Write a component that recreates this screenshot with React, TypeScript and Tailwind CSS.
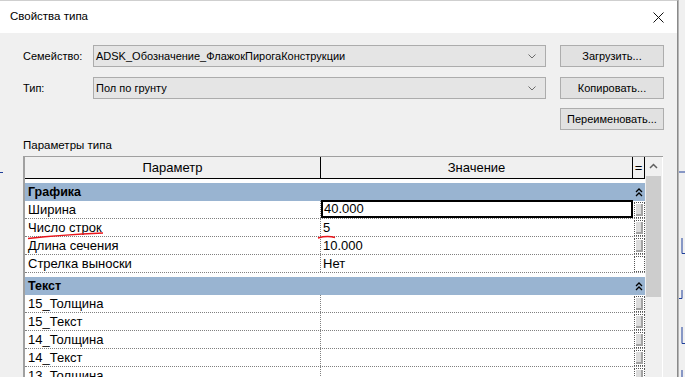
import React from "react";

const dlgFont = { fontFamily: '"Liberation Sans", Arial, sans-serif' };
const tblFont = { fontFamily: '"Liberation Sans", Arial, sans-serif' };

function Chevron() {
  return (
    <svg width="8" height="5" viewBox="0 0 8 5">
      <path d="M0.5 0.5 L4 4 L7.5 0.5" fill="none" stroke="#6b6b6b" strokeWidth="1" />
    </svg>
  );
}

function Dropdown({ text }: { text: string }) {
  return (
    <div className="flex-1 h-[22px] bg-[#e5e5e5] border border-[#acacac] flex items-center pl-[2px] pr-[9px]">
      <span className="flex-1 text-[11px] text-black whitespace-nowrap">{text}</span>
      <Chevron />
    </div>
  );
}

function Btn({ text }: { text: string }) {
  return (
    <div className="w-[104px] h-[22px] bg-[#e1e1e1] border border-[#adadad] flex items-center justify-center text-[11px] text-black whitespace-nowrap">
      {text}
    </div>
  );
}

function DoubleUp() {
  return (
    <svg width="8" height="9" viewBox="0 0 8 9">
      <path d="M1 4 L4 1 L7 4" fill="none" stroke="#000" strokeWidth="1.3" />
      <path d="M1 8 L4 5 L7 8" fill="none" stroke="#000" strokeWidth="1.3" />
    </svg>
  );
}

function EqBox({ empty }: { empty?: boolean }) {
  return (
    <div className="w-[12px] flex items-center justify-center">
      <div className="w-[11px] h-[16px] border border-dotted border-[#555] p-[1px] flex">
        {!empty && <div className="flex-1 bg-[#dcdcdc] border-r-2 border-b-2 border-[#a3a3a3]" />}
      </div>
    </div>
  );
}

type Row = { name: string; value: string; focus?: boolean; empty?: boolean };
const groups: { title: string; rows: Row[] }[] = [
  {
    title: "Графика",
    rows: [
      { name: "Ширина", value: "40.000", focus: true },
      { name: "Число строк", value: "5" },
      { name: "Длина сечения", value: "10.000" },
      { name: "Стрелка выноски", value: "Нет", empty: true },
    ],
  },
  {
    title: "Текст",
    rows: [
      { name: "15_Толщина", value: "" },
      { name: "15_Текст", value: "" },
      { name: "14_Толщина", value: "" },
      { name: "14_Текст", value: "" },
      { name: "13_Толщина", value: "" },
    ],
  },
];

export default function App() {
  return (
    <div className="relative w-[685px] h-[377px] overflow-hidden flex bg-[#ececec]" style={dlgFont}>
      <div className="w-[678px] h-full flex flex-col border-r border-t border-[#8a8a8a] border-t-[#cfcfcf]">
        <div className="h-[32px] bg-white flex items-center justify-between pl-[10px] pr-[13px]">
          <span className="text-[11.5px] text-black">Свойства типа</span>
          <svg width="11" height="11" viewBox="0 0 11 11">
            <path d="M0.5 0.5 L10.5 10.5 M10.5 0.5 L0.5 10.5" stroke="#111" strokeWidth="1" />
          </svg>
        </div>
        <div className="flex-1 bg-[#f0f0f0] pl-[23px] pr-[13px] pt-[12px] overflow-hidden">
          <div className="flex items-center h-[22px]">
            <span className="w-[70px] text-[11px] text-black">Семейство:</span>
            <Dropdown text="ADSK_Обозначение_ФлажокПирогаКонструкции" />
            <div className="w-[14px]" />
            <Btn text="Загрузить..." />
          </div>
          <div className="flex items-center h-[22px] mt-[10px]">
            <span className="w-[70px] text-[11px] text-black">Тип:</span>
            <Dropdown text="Пол по грунту" />
            <div className="w-[14px]" />
            <Btn text="Копировать..." />
          </div>
          <div className="flex justify-end h-[22px] mt-[9px]">
            <Btn text="Переименовать..." />
          </div>
          <div className="mt-[7px] text-[11.5px] leading-[16px] text-black">Параметры типа</div>
          <div className="mt-[3px] w-[640px] h-[240px] border-t border-l-2 border-[#a0a0a0] border-t-[#a0a0a0] flex" style={tblFont}>
            <div className="w-[620px] bg-white flex flex-col">
              <div className="h-[22px] flex bg-[#f0f0f0] border-b border-black text-[13px] text-black">
                <div className="w-[296px] border-r border-black flex items-center justify-center">Параметр</div>
                <div className="w-[312px] border-r border-black flex items-center justify-center">Значение</div>
                <div className="w-[12px] border-r border-black flex items-center justify-center">=</div>
              </div>
              {groups.map((g) => (
                <div key={g.title} className="flex flex-col">
                  <div className="h-[22px] border-t-4 border-white bg-[#99b4d1] flex items-center">
                    <span className="flex-1 pl-[3px] pt-px text-[12.5px] font-bold text-black">{g.title}</span>
                    <div className="w-[12px] flex justify-center">
                      <DoubleUp />
                    </div>
                  </div>
                  {g.rows.map((r) => (
                    <div key={r.name} className="h-[18px] flex border-b border-dotted border-[#808080] text-[13px] text-black">
                      <div className="w-[296px] border-r border-dotted border-[#808080] pl-[3px] pt-px flex items-center whitespace-nowrap">
                        {r.name}
                      </div>
                      <div
                        className={
                          r.focus
                            ? "w-[312px] border-2 border-black -mt-px pl-[1px] flex items-center"
                            : "w-[312px] pl-[2px] pt-px flex items-center"
                        }
                      >
                        {r.value}
                      </div>
                      <EqBox empty={r.empty} />
                    </div>
                  ))}
                </div>
              ))}
            </div>
            <div className="w-[17px] bg-[#f0f0f0] flex flex-col">
              <div className="h-[17px] flex items-center justify-center">
                <svg width="9" height="6" viewBox="0 0 9 6">
                  <path d="M1 5 L4.5 1.5 L8 5" fill="none" stroke="#606060" strokeWidth="1.5" />
                </svg>
              </div>
              <div className="mt-[2px] mx-[1px] h-[121px] bg-[#cdcdcd]" />
            </div>
            <div className="w-px bg-white" />
          </div>
        </div>
      </div>
      <div className="flex-1 bg-[#f0f0f0] border-l border-[#b5b5b5]" />
      <svg className="absolute left-0 top-0 pointer-events-none" width="685" height="377" viewBox="0 0 685 377">
        <path d="M28 238.5 Q 60 235 103 233" fill="none" stroke="#e8141a" strokeWidth="1.5" />
        <path d="M318 238 Q 327 235.5 335 237.5" fill="none" stroke="#e8141a" strokeWidth="1.5" />
        <path d="M679 172 L685 172" stroke="#1f3f9a" strokeWidth="1" />
        <path d="M682 238 L682 253.5 L685 253.5" fill="none" stroke="#1f3f9a" strokeWidth="1" />
        <path d="M679 298.5 L682 298.5 L682 290" fill="none" stroke="#1f3f9a" strokeWidth="1" />
        <path d="M682 327 L682 343.5 L685 343.5" fill="none" stroke="#1f3f9a" strokeWidth="1" />
        <path d="M682 370 L682 377" fill="none" stroke="#1f3f9a" strokeWidth="1" />
        <path d="M0 172.5 L3 172.5" stroke="#1f3f9a" strokeWidth="1" />
      </svg>
    </div>
  );
}
